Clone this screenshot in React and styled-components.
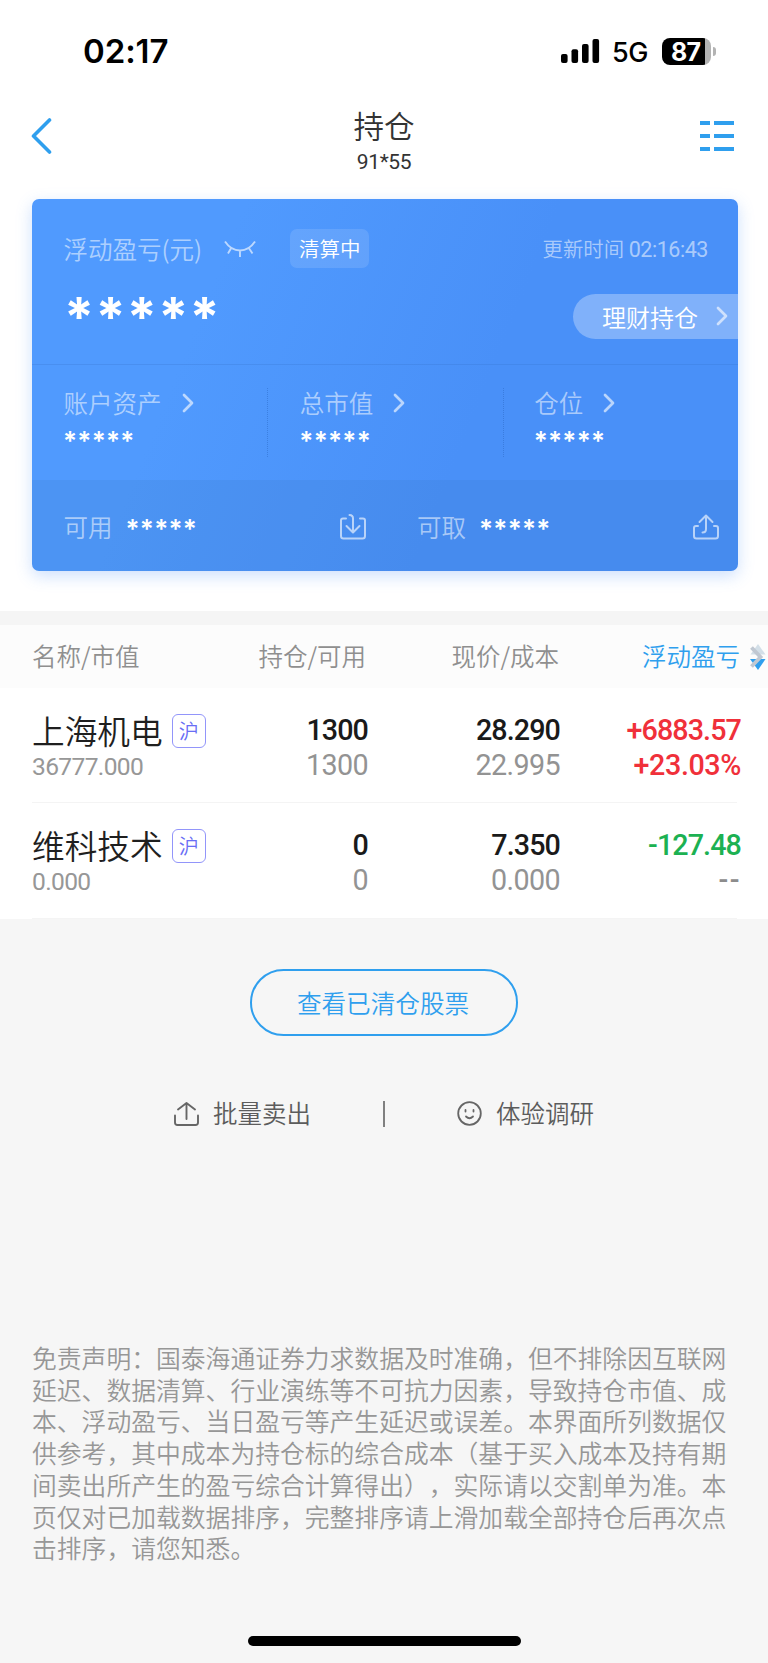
import styled, { createGlobalStyle } from "styled-components";

const HOLDINGS = [
    { name: "上海机电", market: "沪", value: "36777.000", amount: "1300", usable: "1300", price: "28.290", cost: "22.995", profit: "+6883.57", rate: "+23.03%", trend: "up" },
    { name: "维科技术", market: "沪", value: "0.000", amount: "0", usable: "0", price: "7.350", cost: "0.000", profit: "-127.48", rate: "--", trend: "down" },
];

const DISCLAIMER = `免责声明：国泰海通证券力求数据及时准确，但不排除因互联网
延迟、数据清算、行业演练等不可抗力因素，导致持仓市值、成
本、浮动盈亏、当日盈亏等产生延迟或误差。本界面所列数据仅
供参考，其中成本为持仓标的综合成本（基于买入成本及持有期
间卖出所产生的盈亏综合计算得出），实际请以交割单为准。本
页仅对已加载数据排序，完整排序请上滑加载全部持仓后再次点
击排序，请您知悉。`;

const TREND_COLORS = { up: "#f0303a", down: "#1cb152", none: "#8c8c8c" };

function StatusBar() {
    return (
        <StatusRow>
            <Clock>02:17</Clock>
            <StatusIcons>
                <svg width="39" height="25" viewBox="0 0 39 25">
                    <rect x="0" y="15" width="6.6" height="9" rx="2" />
                    <rect x="10.5" y="10.3" width="6.6" height="13.7" rx="2" />
                    <rect x="21" y="5" width="6.6" height="19" rx="2" />
                    <rect x="31.5" y="0" width="6.6" height="24" rx="2" />
                </svg>
                <Network>5G</Network>
                <Battery>
                    <BatteryBody>87</BatteryBody>
                    <BatteryTip />
                </Battery>
            </StatusIcons>
        </StatusRow>
    );
}

function Chevron() {
    return (
        <svg width="12" height="20" viewBox="0 0 12 20" fill="none" stroke="#fff" strokeOpacity="0.62" strokeWidth="2.7" strokeLinecap="round" strokeLinejoin="round">
            <path d="M2 2l8 8-8 8" />
        </svg>
    );
}

function TopNav() {
    return (
        <Nav>
            <svg width="22" height="38" viewBox="0 0 22 38" fill="none" stroke="#2f9fee" strokeWidth="3.6" strokeLinecap="round" strokeLinejoin="round">
                <path d="M18.500 3L2.500 19l16 16" />
            </svg>
            <Titles>
                <Title>持仓</Title>
                <Account>91*55</Account>
            </Titles>
            <svg width="34" height="30" viewBox="0 0 34 30" fill="#2f9fee">
                <path d="M0 0h10v4H0zM14 0h20v4H14zM0 13h10v4H0zM14 13h20v4H14zM0 26h10v4H0zM14 26h20v4H14z" />
            </svg>
        </Nav>
    );
}

function AssetCard() {
    return (
        <Card>
            <Summary>
                <SummaryTop>
                    <Label>浮动盈亏(元)</Label>
                    <EyeIcon width="32" height="18" viewBox="0 0 32 18" fill="none" stroke="#fff" strokeOpacity="0.62" strokeWidth="1.9">
                        <path d="M1 1.500Q7 10.500 16 10.500T31 1.500M7.500 7.500L4 13.500M16 10.500V17M24.500 7.500L28.500 13.500" />
                    </EyeIcon>
                    <Clearing>清算中</Clearing>
                    <Updated>更新时间 <Digits>02:16:43</Digits></Updated>
                </SummaryTop>
                <SummaryBottom>
                    <BigMask>*****</BigMask>
                    <WealthButton>理财持仓<Chevron /></WealthButton>
                </SummaryBottom>
            </Summary>
            <Stats>
                {["账户资产", "总市值", "仓位"].map(label => (
                    <Stat key={label}>
                        <StatLabel>{label}<Chevron /></StatLabel>
                        <Mask>*****</Mask>
                    </Stat>
                ))}
            </Stats>
            <Funds>
                <Fund>
                    <Label>可用</Label>
                    <Mask $raised>*****</Mask>
                    <svg width="28" height="28" viewBox="0 0 28 28" fill="none" stroke="#fff" strokeOpacity="0.62" strokeWidth="2" strokeLinecap="round" strokeLinejoin="round">
                        <path d="M7 5.500H4Q2 5.500 2 7.500V23Q2 25.500 4.500 25.500H23.500Q26 25.500 26 23V7.500Q26 5.500 24 5.500H21" />
                        <path d="M10.500 2Q14 2 14 5.500V19M7.500 13L14 19.500L20.500 13" />
                    </svg>
                </Fund>
                <Fund>
                    <Label>可取</Label>
                    <Mask $raised>*****</Mask>
                    <svg width="28" height="28" viewBox="0 0 28 28" fill="none" stroke="#fff" strokeOpacity="0.62" strokeWidth="2" strokeLinecap="round" strokeLinejoin="round">
                        <path d="M6 13H4Q2 13 2 15V23Q2 25.500 4.500 25.500H23.500Q26 25.500 26 23V15Q26 13 24 13H22" />
                        <path d="M10.500 19.500Q14 19.500 14 16V2.500M7.500 9L14 2.500L20.500 9" />
                    </svg>
                </Fund>
            </Funds>
        </Card>
    );
}

function HoldingsTable() {
    return (
        <Table>
            <HeadRow>
                <HeadCell $left>名称/市值</HeadCell>
                <HeadCell>持仓/可用</HeadCell>
                <HeadCell>现价/成本</HeadCell>
                <HeadCell $active>浮动盈亏</HeadCell>
                <SortIcon width="16" height="26" viewBox="0 0 16 26">
                    <path d="M8 0l7.500 10.500H.5z" fill="#d3dfe8" />
                    <path d="M0 15h15.500L8 26z" fill="#2f9fee" />
                    <path d="M1.500 3.500L10.500 13L1.500 22.500" fill="none" stroke="#c0c8d2" strokeWidth="3.800" />
                </SortIcon>
            </HeadRow>
            {HOLDINGS.map(h => (
                <Row key={h.name}>
                    <NameCell>
                        <NameLine>
                            <Name>{h.name}</Name>
                            <Market>{h.market}</Market>
                        </NameLine>
                        <Value>{h.value}</Value>
                    </NameCell>
                    <Cell><Figure>{h.amount}</Figure><Figure $muted>{h.usable}</Figure></Cell>
                    <Cell><Figure>{h.price}</Figure><Figure $muted>{h.cost}</Figure></Cell>
                    <Cell>
                        <Figure $trend={h.trend}>{h.profit}</Figure>
                        <Rate $trend={h.rate === "--" ? "none" : h.trend}>{h.rate}</Rate>
                    </Cell>
                </Row>
            ))}
        </Table>
    );
}

export default function App() {
    return (
        <Page>
            <GlobalStyle />
            <Top>
                <StatusBar />
                <TopNav />
                <AssetCard />
            </Top>
            <HoldingsTable />
            <ClearedButton>查看已清仓股票</ClearedButton>
            <Actions>
                <Action>
                    <svg width="26" height="26" viewBox="0 0 26 26" fill="none" stroke="#666" strokeWidth="1.9" strokeLinecap="round" strokeLinejoin="round">
                        <path d="M1 14.500V21.500Q1 24 3.500 24H21.500Q24 24 24 21.500V14.500M12.500 18V2.500M4 8.500L12.500 2L21 8.500" />
                    </svg>
                    <ActionText>批量卖出</ActionText>
                </Action>
                <ActionDivider />
                <Action>
                    <svg width="26" height="26" viewBox="0 0 26 26" fill="none" stroke="#666" strokeWidth="1.800" strokeLinecap="round">
                        <circle cx="12.500" cy="12.500" r="11.300" />
                        <path d="M8.500 9V10.500M16.500 9V10.500M9 15.500Q12.500 19 16 15.500" />
                    </svg>
                    <ActionText>体验调研</ActionText>
                </Action>
            </Actions>
            <Disclaimer>{DISCLAIMER}</Disclaimer>
            <HomeIndicator />
        </Page>
    );
}

const GlobalStyle = createGlobalStyle`
    * {
        box-sizing: border-box;
    }

    body {
        margin: 0;
        background: #f6f6f6;
        font-family: "Noto Sans CJK SC", sans-serif;
        font-weight: 350;
    }

    svg {
        flex: none;
        display: block;
    }
`

const Page = styled.div`
    display: flex;
    flex-direction: column;
    align-items: center;
    width: 768px;
    height: 1663px;
    overflow: hidden;
    white-space: nowrap;
`

const Top = styled.header`
    width: 100%;
    height: 611px;
    background: #fff;
`

const StatusRow = styled.div`
    display: flex;
    justify-content: space-between;
    align-items: center;
    height: 102px;
    padding: 0 52px 0 83px;
    color: #000;
    font-family: Inter, sans-serif;
`

const Clock = styled.div`
    font-size: 33px;
    font-weight: 600;
    letter-spacing: -0.1px;
`

const StatusIcons = styled.div`
    display: flex;
    align-items: center;
`

const Network = styled.span`
    width: 50px;
    margin-left: 12px;
    padding-top: 3px;
    font-size: 27px;
    font-weight: 500;
    line-height: 30px;
    letter-spacing: -0.5px;
`

const Battery = styled.div`
    display: flex;
    align-items: center;
    gap: 2px;
`

const BatteryBody = styled.div`
    width: 49px;
    height: 27px;
    padding-left: 9px;
    border-radius: 8px;
    background: linear-gradient(90deg, #000 43px, #b3b3b3 43px);
    color: #fff;
    font-size: 25px;
    font-weight: 700;
    line-height: 28px;
    letter-spacing: -0.8px;
`

const BatteryTip = styled.i`
    width: 3px;
    height: 9px;
    border-radius: 0 4px 4px 0;
    background: #b3b3b3;
`

const Nav = styled.nav`
    display: flex;
    justify-content: space-between;
    align-items: center;
    height: 68px;
    padding: 0 34px 0 31px;
`

const Titles = styled.div`
    display: flex;
    flex-direction: column;
    align-items: center;
    padding: 16px 0 0 15px;
    color: #333;
`

const Title = styled.h1`
    margin: 0;
    font-size: 30.600px;
    font-weight: 350;
    line-height: 36px;
`

const Account = styled.div`
    font-family: Roboto, sans-serif;
    font-size: 21px;
    font-weight: 400;
    line-height: 38px;
    letter-spacing: -0.400px;
`

const Card = styled.section`
    display: flex;
    flex-direction: column;
    width: 706px;
    height: 372px;
    margin: 29px 0 0 32px;
    overflow: hidden;
    border-radius: 7px;
    background: linear-gradient(112deg, #509afe 25%, #4990f8 62%);
    box-shadow: 0 5px 16px rgba(74, 144, 248, 0.28);
    color: rgba(255, 255, 255, 0.55);
`

const Summary = styled.div`
    height: 166px;
    padding-top: 30px;
    border-bottom: 1px solid rgba(50, 110, 200, 0.25);
`

const SummaryTop = styled.div`
    display: flex;
    align-items: center;
    height: 39px;
    padding: 0 30px 0 32px;
`

const Label = styled.span`
    margin-left: -0.500px;
    font-size: 24.500px;
    line-height: 36px;
`

const EyeIcon = styled.svg`
    margin: 1px 34px 0 22px;
`

const Clearing = styled.span`
    width: 79px;
    height: 39px;
    border-radius: 7px;
    background: rgba(255, 255, 255, 0.12);
    color: #fff;
    font-size: 20.500px;
    line-height: 39px;
    text-align: center;
`

const Updated = styled.span`
    margin-left: auto;
    padding-bottom: 1px;
    font-size: 20.400px;
`

const Digits = styled.span`
    font-family: Roboto, sans-serif;
    font-size: 21.500px;
    font-weight: 400;
    letter-spacing: -0.450px;
`

const SummaryBottom = styled.div`
    display: flex;
    justify-content: space-between;
    padding: 26px 0 0 32px;
`

const BigMask = styled.span`
    height: 45px;
    color: #fff;
    font-family: Inter, sans-serif;
    font-size: 54px;
    font-weight: 700;
    line-height: 46px;
    letter-spacing: 1.200px;
`

const WealthButton = styled.button`
    display: flex;
    align-items: center;
    gap: 18px;
    width: 165px;
    height: 45px;
    padding: 0 0 1px 29px;
    border: 0;
    border-radius: 23px 0 0 23px;
    background: rgba(255, 255, 255, 0.3);
    color: #fff;
    font: inherit;
    font-size: 24px;
`

const Stats = styled.div`
    display: flex;
    height: 115px;
    padding-top: 23px;
`

const Stat = styled.div`
    width: 236px;
    height: 69px;
    padding-left: 32px;

    & + & {
        border-left: 1px dotted rgba(40, 100, 190, 0.45);
    }

    &:last-child {
        padding-left: 31px;
    }
`

const StatLabel = styled.div`
    display: flex;
    align-items: center;
    gap: 20px;
    margin-left: -0.500px;
    font-size: 24.500px;
    line-height: 30px;
`

const Mask = styled.span`
    display: block;
    height: 30px;
    margin-left: -1px;
    color: #fff;
    font-family: Inter, sans-serif;
    font-size: 26px;
    font-weight: 600;
    line-height: ${props => props.$raised ? "33px" : "46px"};
    letter-spacing: 0.300px;
`

const Funds = styled.div`
    display: flex;
    flex: 1;
    align-items: center;
    gap: 51px;
    padding: 3px 18px 0 32px;
    background: rgba(60, 120, 190, 0.17);
`

const Fund = styled.div`
    display: flex;
    align-items: center;
    gap: 14px;
    width: 303px;

    svg {
        margin-left: auto;
    }
`

const Table = styled.section`
    width: 100%;
    padding-top: 14px;
    background: linear-gradient(#f5f5f5 14px, #fff 14px);
`

const HeadRow = styled.div`
    display: grid;
    grid-template-columns: 180px 154px 193px 181px 27px;
    align-items: center;
    height: 63px;
    padding-left: 32px;
    background: #fcfcfc;
`

const HeadCell = styled.span`
    padding-bottom: 2px;
    color: ${props => props.$active ? "#2f9fee" : "#8f8f8f"};
    font-size: 24.500px;
    text-align: ${props => props.$left ? "left" : "right"};
`

const SortIcon = styled.svg`
    margin-left: 10px;
`

const Row = styled.div`
    display: grid;
    grid-template-columns: 180px 156px 192px 181px;
    height: 115px;
    margin-left: 32px;
    padding-top: 25px;
    background: linear-gradient(#f4f4f4, #f4f4f4) 0 100% / 705px 1px no-repeat;

    &:last-child {
        height: 116px;
    }
`

const NameCell = styled.div`
    display: flex;
    flex-direction: column;
`

const NameLine = styled.div`
    display: flex;
    align-items: center;
    gap: 9px;
    height: 36px;
`

const Name = styled.span`
    padding-bottom: 3px;
    color: #1f1f1f;
    font-size: 32.700px;
    font-weight: 350;
`

const Market = styled.span`
    width: 34px;
    height: 34px;
    border: 1.500px solid #9295fa;
    border-radius: 6px;
    color: #696df5;
    font-size: 20px;
    line-height: 31px;
    text-align: center;
`

const Value = styled.div`
    color: #979797;
    font-family: Roboto, sans-serif;
    font-size: 24.600px;
    font-weight: 400;
    line-height: 35px;
    letter-spacing: -0.650px;
`

const Cell = styled.div`
    display: flex;
    flex-direction: column;
    align-items: flex-end;
`

const Figure = styled.div`
    color: ${props => props.$trend ? TREND_COLORS[props.$trend] : props.$muted ? "#939393" : "#1a1a1a"};
    font-family: Roboto, sans-serif;
    font-size: 28.700px;
    font-weight: ${props => props.$muted ? 400 : 500};
    line-height: 35px;
    letter-spacing: ${props => props.$muted ? "-0.600px" : "-0.900px"};
`

const Rate = styled(Figure)`
    letter-spacing: ${props => props.$trend === "none" ? "1.500px" : "-0.400px"};
`

const ClearedButton = styled.button`
    flex: none;
    width: 268px;
    height: 67px;
    margin-top: 50px;
    padding: 0 8px 2px 6px;
    border: 2px solid #2f9fee;
    border-radius: 34px;
    background: transparent;
    color: #2f9fee;
    font: inherit;
    font-size: 24.600px;
`

const Actions = styled.div`
    display: flex;
    align-items: center;
    gap: 72px;
    height: 36px;
    margin-top: 60px;
`

const Action = styled.div`
    display: flex;
    align-items: center;
    gap: 13px;
    color: #5c5c5c;
    font-size: 24.500px;
`

const ActionText = styled.span`
    padding-bottom: 3px;
`

const ActionDivider = styled.i`
    width: 2px;
    height: 26px;
    background: #808080;
`

const Disclaimer = styled.p`
    width: 704px;
    margin: 210px 0 0;
    color: #979797;
    font-size: 24.800px;
    line-height: 31.700px;
    white-space: pre;
    text-spacing-trim: space-all;
`

const HomeIndicator = styled.div`
    flex: none;
    width: 273px;
    height: 10px;
    margin: auto 0 17px;
    border-radius: 5px;
    background: #000;
`
